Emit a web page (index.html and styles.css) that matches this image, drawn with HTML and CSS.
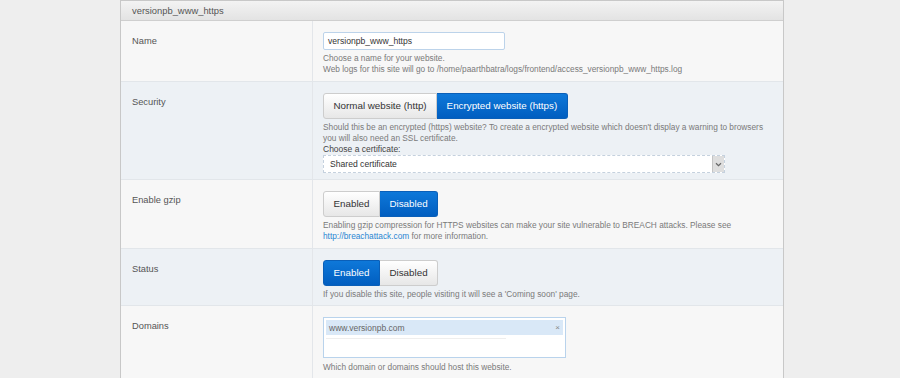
FILE: index.html
```html
<!DOCTYPE html>
<html>
<head>
<meta charset="utf-8">
<link rel="stylesheet" href="styles.css">
</head>
<body>
<div class="panel">
  <div class="panel-head">versionpb_www_https</div>
  <div class="row light">
    <div class="label">Name</div>
    <div class="field">
      <div class="text-input">versionpb_www_https</div>
      <div class="help">Choose a name for your website.<br>Web logs for this site will go to /home/paarthbatra/logs/frontend/access_versionpb_www_https.log</div>
    </div>
  </div>
  <div class="row blue">
    <div class="label">Security</div>
    <div class="field">
      <div class="btn-group">
        <span class="btn">Normal website (http)</span><span class="btn active">Encrypted website (https)</span>
      </div>
      <div class="help">Should this be an encrypted (https) website? To create a encrypted website which doesn't display a warning to browsers<br>you will also need an SSL certificate.</div>
      <div class="sublabel">Choose a certificate:</div>
      <div class="select"><span class="select-text">Shared certificate</span><span class="select-arrow"><svg width="7" height="5" viewBox="0 0 7 5"><path d="M1 1.2 L3.5 3.6 L6 1.2" fill="none" stroke="#666" stroke-width="1.2"/></svg></span></div>
    </div>
  </div>
  <div class="row light">
    <div class="label">Enable gzip</div>
    <div class="field">
      <div class="btn-group">
        <span class="btn">Enabled</span><span class="btn active">Disabled</span>
      </div>
      <div class="help">Enabling gzip compression for HTTPS websites can make your site vulnerable to BREACH attacks. Please see<br><a class="link">http://breachattack.com</a> for more information.</div>
    </div>
  </div>
  <div class="row blue">
    <div class="label">Status</div>
    <div class="field status-field">
      <div class="btn-group">
        <span class="btn active">Enabled</span><span class="btn">Disabled</span>
      </div>
      <div class="help">If you disable this site, people visiting it will see a 'Coming soon' page.</div>
    </div>
  </div>
  <div class="row light">
    <div class="label">Domains</div>
    <div class="field">
      <div class="tagbox">
        <div class="tag"><span>www.versionpb.com</span><span class="tag-x">×</span></div>
        <div class="tag-input"></div>
      </div>
      <div class="help">Which domain or domains should host this website.</div>
    </div>
  </div>
</div>
</body>
</html>
```
FILE: styles.css
```css
html, body {
  margin: 0;
  padding: 0;
  background: #eeeeee;
  font-family: "Liberation Sans", Arial, sans-serif;
  color: #555;
}
.panel {
  margin-left: 120px;
  width: 664px;
  box-sizing: border-box;
  border: 1px solid #c8c8c8;
  border-bottom: none;
  height: 378px;
  overflow: hidden;
  background: #f7f7f7;
}
.panel-head {
  height: 19px;
  line-height: 19px;
  padding-left: 11px;
  font-size: 9.4px;
  color: #555;
  background: linear-gradient(#f3f3f3, #e3e3e3);
  border-bottom: 1px solid #cfcfcf;
}
.row {
  display: grid;
  grid-template-columns: 192px 1fr;
  border-bottom: 1px solid #e2e6ea;
}
.row.light { background: #f7f7f7; }
.row.blue { background: #edf1f5; }
.label {
  border-right: 1px solid #e3e6ea;
  padding: 13px 0 0 11px;
  font-size: 9.3px;
  line-height: 14px;
  color: #555;
}
.field {
  padding: 11px 10px 6px 10px;
}
.status-field { padding-bottom: 5px; }
.text-input {
  width: 182px;
  height: 18px;
  box-sizing: border-box;
  border: 1px solid #bcd3ea;
  border-radius: 2px;
  background: #fff;
  font-size: 8.6px;
  line-height: 16px;
  padding-left: 4px;
  color: #333;
}
.help {
  margin-top: 3px;
  font-size: 8.3px;
  line-height: 11px;
  color: #7a7a7a;
}
.link { color: #2a86d2; }
.btn-group {
  display: flex;
  height: 26px;
}
.btn {
  box-sizing: border-box;
  height: 26px;
  line-height: 24px;
  padding: 0 9.5px;
  font-size: 9.8px;
  color: #333;
  border: 1px solid #cdcdcd;
  background: linear-gradient(#ffffff, #e7e7e7);
}
.btn:first-child { border-radius: 3px 0 0 3px; }
.btn:last-child { border-radius: 0 3px 3px 0; border-left: none; }
.btn.active {
  color: #fff;
  border-color: #0a5fb8;
  background: linear-gradient(#0e78d9, #015ec0);
}
.sublabel {
  font-size: 8.5px;
  line-height: 11px;
  color: #444;
}
.select {
  display: flex;
  width: 402px;
  height: 18px;
  box-sizing: border-box;
  border: 1px dashed #c5d1de;
  background: #fff;
}
.select-text {
  flex: 1;
  font-size: 8.6px;
  line-height: 16px;
  padding-left: 6px;
  color: #333;
}
.select-arrow {
  width: 11px;
  background: #dedede;
  border-left: 1px solid #c4c4c4;
  display: flex;
  align-items: center;
  justify-content: center;
}
.tagbox {
  width: 243px;
  height: 41px;
  box-sizing: border-box;
  border: 1px solid #b9d3ec;
  background: #fff;
  padding: 2px;
}
.tag {
  display: flex;
  justify-content: space-between;
  align-items: center;
  height: 15px;
  background: #d9e8f7;
  padding: 0 3px 0 3px;
  font-size: 8.5px;
  color: #666;
}
.tag-x { font-size: 8px; color: #888; }
.tag-input {
  margin-top: 3px;
  width: 180px;
  height: 1px;
  background: #eeeeee;
}
.row:last-child .help { margin-top: 4px; }
```
